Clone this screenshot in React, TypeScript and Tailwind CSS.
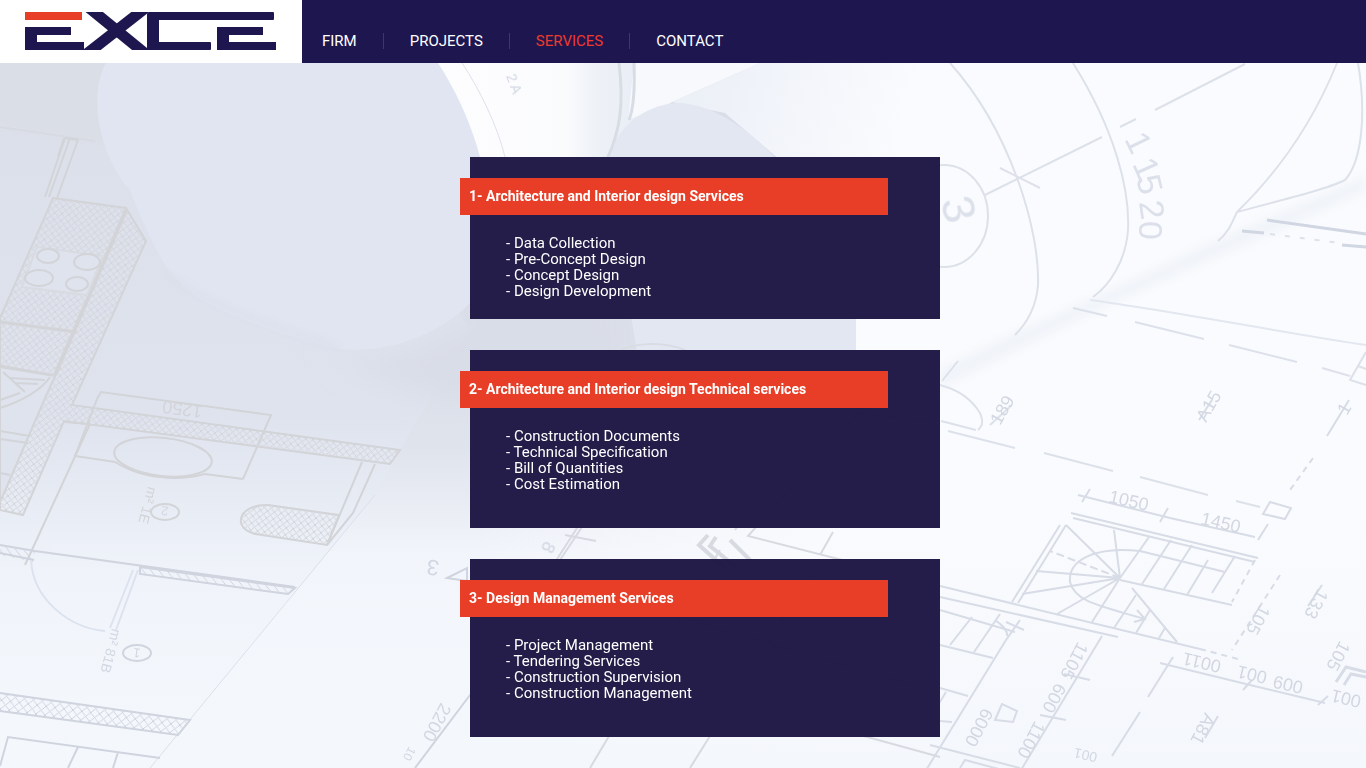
const NAV_ITEMS = [
  { label: 'FIRM', active: false },
  { label: 'PROJECTS', active: false },
  { label: 'SERVICES', active: true },
  { label: 'CONTACT', active: false },
];

type Service = { title: string; items: string[]; short?: boolean };

const SERVICES: Service[] = [
  {
    title: '1- Architecture and Interior design Services',
    items: ['Data Collection', 'Pre-Concept Design', 'Concept Design', 'Design Development'],
    short: true,
  },
  {
    title: '2- Architecture and Interior design Technical services',
    items: ['Construction Documents', 'Technical Specification', 'Bill of Quantities', 'Cost Estimation'],
  },
  {
    title: '3- Design Management Services',
    items: ['Project Management', 'Tendering Services', 'Construction Supervision', 'Construction Management'],
  },
];

function Logo() {
  return (
    <svg width="302" height="63" viewBox="0 0 302 63" role="img" aria-label="EXCE">
      <rect x="25" y="12" width="57" height="8" fill="#e83d26" />
      <g fill="#1e164f">
        <rect x="25" y="27" width="46" height="8" />
        <rect x="25" y="27" width="12" height="23" />
        <rect x="25" y="42" width="59" height="8" />
        <rect x="148" y="12" width="126" height="8" rx="1" />
        <rect x="147" y="13" width="12" height="37" rx="1" />
        <rect x="148" y="42" width="63" height="8" rx="1" />
        <rect x="217" y="27" width="46" height="8" />
        <rect x="217" y="27" width="12" height="23" />
        <rect x="217" y="42" width="59" height="8" />
      </g>
      <svg x="84" y="12" width="66" height="38" viewBox="0 0 66 38">
        <g stroke="#1e164f" strokeWidth="11">
          <line x1="-2" y1="-10" x2="69" y2="48" />
          <line x1="69" y1="-10" x2="-5" y2="48" />
        </g>
      </svg>
    </svg>
  );
}

function Blueprint() {
  return (
    <svg
      className="absolute inset-0 h-full w-full"
      viewBox="0 0 1366 768"
      preserveAspectRatio="xMidYMid slice"
      aria-hidden="true"
    >
      <defs>
        <linearGradient id="paper" x1="0" y1="0" x2="0" y2="1">
          <stop offset="0" stopColor="#dbdfe9" />
          <stop offset="0.5" stopColor="#dfe3ee" />
          <stop offset="0.72" stopColor="#eef2f9" />
          <stop offset="1" stopColor="#f3f6fb" />
        </linearGradient>
        <linearGradient id="desk" x1="0" y1="0" x2="0" y2="1">
          <stop offset="0.4" stopColor="#dadee8" />
          <stop offset="0.58" stopColor="#dfe3ec" />
          <stop offset="0.72" stopColor="#f1f4fa" />
          <stop offset="1" stopColor="#f4f7fc" />
        </linearGradient>
        <linearGradient id="sheet" gradientUnits="userSpaceOnUse" x1="470" y1="0" x2="850" y2="0">
          <stop offset="0" stopColor="#fafbfe" stopOpacity="0" />
          <stop offset="1" stopColor="#fafbfe" />
        </linearGradient>
        <linearGradient id="roll" gradientUnits="userSpaceOnUse" x1="700" y1="80" x2="900" y2="140">
          <stop offset="0" stopColor="#ecf0f7" />
          <stop offset="1" stopColor="#fafbfe" />
        </linearGradient>
        <linearGradient id="tube" gradientUnits="userSpaceOnUse" x1="440" y1="0" x2="635" y2="0">
          <stop offset="0" stopColor="#fdfdfe" />
          <stop offset="0.65" stopColor="#fafbfd" />
          <stop offset="0.8" stopColor="#eef2f7" />
          <stop offset="1" stopColor="#e9edf5" />
        </linearGradient>
        <linearGradient id="low" x1="0" y1="0" x2="0" y2="1">
          <stop offset="0" stopColor="#f4f7fc" stopOpacity="0" />
          <stop offset="1" stopColor="#f4f7fc" />
        </linearGradient>
        <pattern id="weave" width="7" height="7" patternUnits="userSpaceOnUse" patternTransform="rotate(8)">
          <path d="M0 0 7 7M7 0 0 7" stroke="#d2d4d9" strokeWidth="1" />
        </pattern>
        <pattern id="weaveBlue" width="9" height="9" patternUnits="userSpaceOnUse" patternTransform="rotate(8)">
          <path d="M0 0 9 9M9 0 0 9" stroke="#cdd2e0" strokeWidth="1" />
        </pattern>
        <pattern id="slant" width="9" height="9" patternUnits="userSpaceOnUse" patternTransform="rotate(8)">
          <path d="M0 0 9 9" stroke="#cdd1dc" strokeWidth="1" />
        </pattern>
        <filter id="soft" x="-5%" y="-5%" width="110%" height="110%">
          <feGaussianBlur stdDeviation="0.5" />
        </filter>
        <filter id="haze" x="-20%" y="-20%" width="140%" height="140%">
          <feGaussianBlur stdDeviation="14" />
        </filter>
        <filter id="fade" x="-10%" y="-10%" width="120%" height="120%">
          <feGaussianBlur stdDeviation="4" />
        </filter>
      </defs>

      {/* sheets and rolls */}
      <rect width="1366" height="768" fill="url(#desk)" />
      <path d="M0 63H300L470 330 400 450 375 495 150 768H0Z" fill="url(#paper)" />
      <path d="M0 63H140L115 145 0 127Z" fill="#dadee6" filter="url(#fade)" />
      <path d="M760 63H1366V768H470V450L855 350Z" fill="url(#sheet)" />
      <rect y="520" width="1366" height="248" fill="url(#low)" />
      <path d="M320 345C370 375 440 350 490 305L620 310V400C480 410 400 400 320 345Z" fill="#d9dde7" filter="url(#haze)" />
      <path d="M430 63H760L672 102 605 160V200H465Z" fill="url(#tube)" />
      <path d="M634 63 628 120 672 102 760 63Z" fill="#f7f9fc" />
      <path d="M760 63H960V365H855L780 160 725 113 672 102Z" fill="url(#roll)" />
      <path d="M605 160C625 112 660 103 680 103C740 106 830 190 856 320V370H640Z" fill="#e3e7f2" />
      <path d="M106 63C90 90 95 150 130 190C150 240 165 270 178 280C200 310 290 338 340 349C385 354 440 335 470 303C505 260 495 150 438 63Z" fill="#e1e5f1" />
      <path d="M165 272C215 312 290 330 340 348" fill="none" stroke="#d9dde8" strokeWidth="4" filter="url(#fade)" />
      <path d="M940 368 1015 332 1093 297 1215 240 1366 175V192L1100 310 940 390Z" fill="#f1f4f9" filter="url(#fade)" />

      <g filter="url(#soft)" fill="none" stroke="#d2d4d8" strokeWidth="2">
        {/* kitchen */}
        <path d="M0 127 95 141" stroke="#d7dae2" />
        <path d="M65 138 45 197M70 138 49 197M78 140 57 198M64 138 58 156M78 140 65 138" />
        <path d="M53 198 126 208 146 241 72 405 400 450 390 464 64 421 23 515 0 510V318Z" fill="url(#weave)" />
        <path d="M126 210 55 375" strokeWidth="4" />
        <path d="M0 322 77 332M0 366 55 376" strokeWidth="3" />
        <path d="M0 367 55 376 42 405 2 498 0 500Z" fill="#dfe3ee" />
        <path d="M37 247 103 256 87 295 22 287Z" fill="#dfe3ee" stroke="#d8dbe1" />
        <ellipse cx="48" cy="256" rx="11" ry="7" />
        <ellipse cx="87" cy="262" rx="13" ry="8" />
        <ellipse cx="39" cy="278" rx="14" ry="8" />
        <ellipse cx="77" cy="284" rx="11" ry="7" />
        <path d="M3 372 25 392M10 378 45 380M15 383 38 384M0 408C20 402 42 390 50 377M0 400 20 393" />
        <path d="M0 431 30 436M0 439 28 443M0 473 10 475" />

        {/* bathroom */}
        <path d="M97 399 101 392 271 415 243 479M97 399 75 456 115 462C150 484 190 478 205 474L243 479" />
        <path d="M90 424 25 565M64 422 90 424" />
        <ellipse cx="163" cy="457" rx="49" ry="19" transform="rotate(6 163 457)" />
        <path d="M339 515 268 505C236 504 230 532 262 535L327 545Z" fill="url(#weave)" />
        <path d="M362 462 327 545M375 464 353 513 327 545" />
        <ellipse cx="165" cy="512" rx="14" ry="8" />
      </g>

      <g filter="url(#soft)" fill="none" stroke="#cfd4de" strokeWidth="2">
        <path d="M0 545 35 551 295 587M0 553 34 560" />
        <path d="M140 567 295 588 288 594 140 574Z" fill="url(#slant)" />
        <path d="M0 545 35 551 33 562 0 555Z" fill="url(#slant)" stroke="none" />
        <path d="M31 560C33 600 70 628 105 631M138 570 116 630M133 570 110 628" stroke="#dce2ee" />
        <ellipse cx="137" cy="653" rx="14" ry="8" />
        <path d="M375 495 150 768" stroke="#dbe0ea" strokeWidth="1" />
        <path d="M0 693 190 720 178 735 0 711" fill="url(#weaveBlue)" />
        <path d="M0 766 8 737 160 758M78 747 68 768M118 752 113 768" />
        <path d="M470 695 415 768M447 578 467 568V581Z" />
      </g>

      {/* rolled sheets */}
      <g filter="url(#soft)" fill="none" stroke="#dde1ea" strokeWidth="2">
        <path d="M462 63C480 90 497 125 505 157" strokeWidth="1" />
        <path d="M619 63C624 105 620 130 608 157M634 63C635 90 633 110 629 120" stroke="#d8dde5" strokeWidth="3" />
        <path d="M950 63C1010 130 1040 230 1038 285C1036 310 1025 325 1015 335" />
        <path d="M1073 63C1115 130 1130 190 1128 230C1126 260 1110 285 1093 297" />
        <ellipse cx="944" cy="216" rx="44" ry="51" />
        <path d="M985 195 1102 137M1155 110 1245 64M1000 168 1040 188M1120 127 1136 119" />
        <path d="M1337 63C1310 130 1270 180 1237 212C1232 223 1228 233 1218 241M1237 212C1290 198 1330 188 1345 180C1363 160 1366 110 1358 63" />
        <path d="M940 385C960 390 972 400 980 413C985 425 980 428 978 430M942 381 958 361" />
        <path d="M1267 220 1366 234M1242 231 1264 233M1342 245 1366 247" stroke="#d1d6e3" strokeWidth="3" />
        <path d="M1270 234 1340 243" strokeDasharray="5 10" />
        <path d="M1090 300C1180 312 1300 336 1366 345" stroke="#e3e7f0" />
        <path d="M1073 308 1107 316M1135 322 1204 339M1229 345 1297 362M1322 368 1350 376M948 431 1015 448M1044 453 1113 471M1140 477 1208 495M1236 501 1260 507" />
        <path d="M1366 352 1350 380 1366 385M1358 366 1366 369M941 421 976 430M1012 405 990 425" />
      </g>

      {/* staircase plan */}
      <g filter="url(#soft)" fill="none" stroke="#d7dce6" strokeWidth="2">
        <path d="M1078 495 1170 518 1255 537M1090 489 1082 502M1168 508 1160 522M1268 524 1258 540" />
        <path d="M1263 514 1270 502 1291 508 1285 519Z" />
        <path d="M1071 513 1258 558M1073 518 1255 562M1060 525 1012 602M1066 525 1018 603" />
        <path d="M1120 578 1066 525M1120 578 1114 530M1120 578 1149 537M1120 578 1036 571M1120 578 1022 594M1120 578 1057 614M1120 578 1092 622M1136 595 1114 628M1150 610 1136 633M1165 628 1159 638" />
        <path d="M1120 578 1050 551" strokeDasharray="8 4" />
        <path d="M1171 540 1142 584M1192 545 1164 589M1208 560 1187 595M1235 556 1212 593" />
        <path d="M1255 560 1232 602" strokeDasharray="6 5" />
        <path d="M1225 572 1140 551C1095 546 1068 560 1070 582C1075 602 1100 606 1145 619M1137 610 1145 619 1134 622" />
        <path d="M1120 580 1232 605M1132 588 1177 642" />
        <path d="M940 586 1200 649M940 597 1118 637M940 610 1015 632" />
        <path d="M1020 620 1006 640 920 780M1102 636 1018 775M972 617 950 645M1000 614 974 652M940 645 993 658M940 688 968 696M946 692 935 710M940 721 952 722M930 745 1020 768M960 768 965 760 1010 772" />
        <path d="M1064 674 1090 680M1040 715 1066 720M1006 622 1024 630M995 620C1002 625 1008 630 1007 636" />
        <path d="M1173 657 1148 697M1140 712 1112 756M1160 663 1250 685 1325 703M1243 690 1252 680M1318 705 1328 696" />
        <path d="M1002 704 995 720 1013 722 1017 711Z" />
        <path d="M1212 400 1199 420M1349 400 1327 436M1322 585 1308 606M1218 716 1205 738" />
        <path d="M1313 458 1290 490M1280 575 1232 650M1200 649 1238 659" strokeDasharray="6 5" />
        <path d="M1336 682 1346 667 1366 672M1344 685 1351 674 1366 677" strokeWidth="3" />
      </g>

      {/* lines crossing behind the cards */}
      <g filter="url(#soft)" fill="none" stroke="#d8dae1" strokeWidth="2">
        <path d="M595 500 550 570M565 535 596 541M870 400 748 536 850 562M830 400 735 530M833 532 820 555M850 412 940 422" />
        <path d="M708 535 699 545 725 568M716 537 710 546 735 566M730 540 750 560" strokeWidth="4" />
        <path d="M470 695 600 500M720 550 590 768M820 560 690 768M620 600 930 690M860 735 940 757" />
        <path d="M620 350C640 342 665 342 685 350" stroke="#d9dce2" />
      </g>

      {/* dimensions */}
      <g fontFamily="Liberation Sans" fill="#d2d7e2" fontSize="18" filter="url(#soft)">
        <g fontSize="34" fill="#dbe0ea">
          <text transform="translate(1124 139) rotate(64)">1</text>
          <text transform="translate(1132 164) rotate(66)">1</text>
          <text transform="translate(1136 178) rotate(76)">5</text>
          <text transform="translate(1139 202) rotate(82)">2</text>
          <text transform="translate(1139 221) rotate(90)">0</text>
          <text fontSize="46" transform="translate(940 201) rotate(75)">3</text>
        </g>
        <text transform="translate(203 406) rotate(188)" fill="#d2d4d8">1250</text>
        <text transform="translate(148 486) rotate(105)" fill="#d2d4d8" fontSize="14">m² 1E</text>
        <text transform="translate(112 628) rotate(105)" fontSize="14">m² 81B</text>
        <text transform="translate(169 507) rotate(188)" fontSize="13">2</text>
        <text transform="translate(141 649) rotate(188)" fontSize="13">1</text>
        <text transform="translate(440 561) rotate(188)" fontSize="22">3</text>
        <text transform="translate(441 702) rotate(118)">2200</text>
        <text transform="translate(409 746) rotate(118)" fontSize="12">10</text>
        <text transform="translate(506 76) rotate(70)" fontSize="14">2 A</text>
        <text transform="translate(1108 502) rotate(13)">1050</text>
        <text transform="translate(1200 524) rotate(13)">1450</text>
        <text transform="translate(1206 423) rotate(-60)">A15</text>
        <text transform="translate(1000 426) rotate(-60)">189</text>
        <text transform="translate(1347 416) rotate(-60)">1</text>
        <text transform="translate(1078 641) rotate(118)">1105</text>
        <text transform="translate(1056 682) rotate(118)">600</text>
        <text transform="translate(1035 720) rotate(118)">1100</text>
        <text transform="translate(983 707) rotate(118)">6000</text>
        <text transform="translate(1222 661) rotate(193)">0011</text>
        <text transform="translate(1268 672) rotate(193)">001</text>
        <text transform="translate(1304 682) rotate(193)">009</text>
        <text transform="translate(1362 696) rotate(193)">001</text>
        <text transform="translate(1098 753) rotate(193)" fontSize="14">001</text>
        <text transform="translate(1205 712) rotate(118)">A81</text>
        <text transform="translate(1318 588) rotate(118)">133</text>
        <text transform="translate(1260 604) rotate(118)">105</text>
        <text transform="translate(1340 640) rotate(118)">105</text>
        <text transform="translate(545 540) rotate(118)">8</text>
      </g>
    </svg>
  );
}

function ServiceCard({ service }: { service: Service }) {
  return (
    <section className={`w-[470px] max-w-full bg-[#1e1643]/97 pt-[21px] ${service.short ? 'pb-[20px]' : 'pb-[36px]'}`}>
      <h2 className="-ml-[10px] w-[428px] bg-[#e83d26] px-[9px] text-[14px] leading-[37px] font-bold whitespace-nowrap">
        {service.title}
      </h2>
      <ul className="mt-[20px] pl-[36px] text-[15px] leading-[16px]">
        {service.items.map((item) => (
          <li key={item}>- {item}</li>
        ))}
      </ul>
    </section>
  );
}

export default function App() {
  return (
    <div className="relative min-h-screen bg-[#f4f7fc] font-['Roboto',sans-serif] text-white">
      <Blueprint />

      <header className="relative flex bg-[#1e164f]">
        <a href="#" className="block shrink-0 bg-white">
          <Logo />
        </a>
        <nav className="flex items-center pt-[18px] pl-[20px] text-[15px] leading-[18px]">
          {NAV_ITEMS.map((item, i) => (
            <div key={item.label} className="flex items-center">
              {i > 0 && <span className="mx-[26px] h-[16px] w-px bg-[#7d1f40]" />}
              <a href="#" className={item.active ? 'text-[#ee3a2c]' : 'text-white'}>
                {item.label}
              </a>
            </div>
          ))}
        </nav>
      </header>

      <main className="relative flex flex-col items-center gap-[31px] pt-[94px] pb-[31px] pl-[44px]">
        {SERVICES.map((service) => (
          <ServiceCard key={service.title} service={service} />
        ))}
      </main>
    </div>
  );
}
